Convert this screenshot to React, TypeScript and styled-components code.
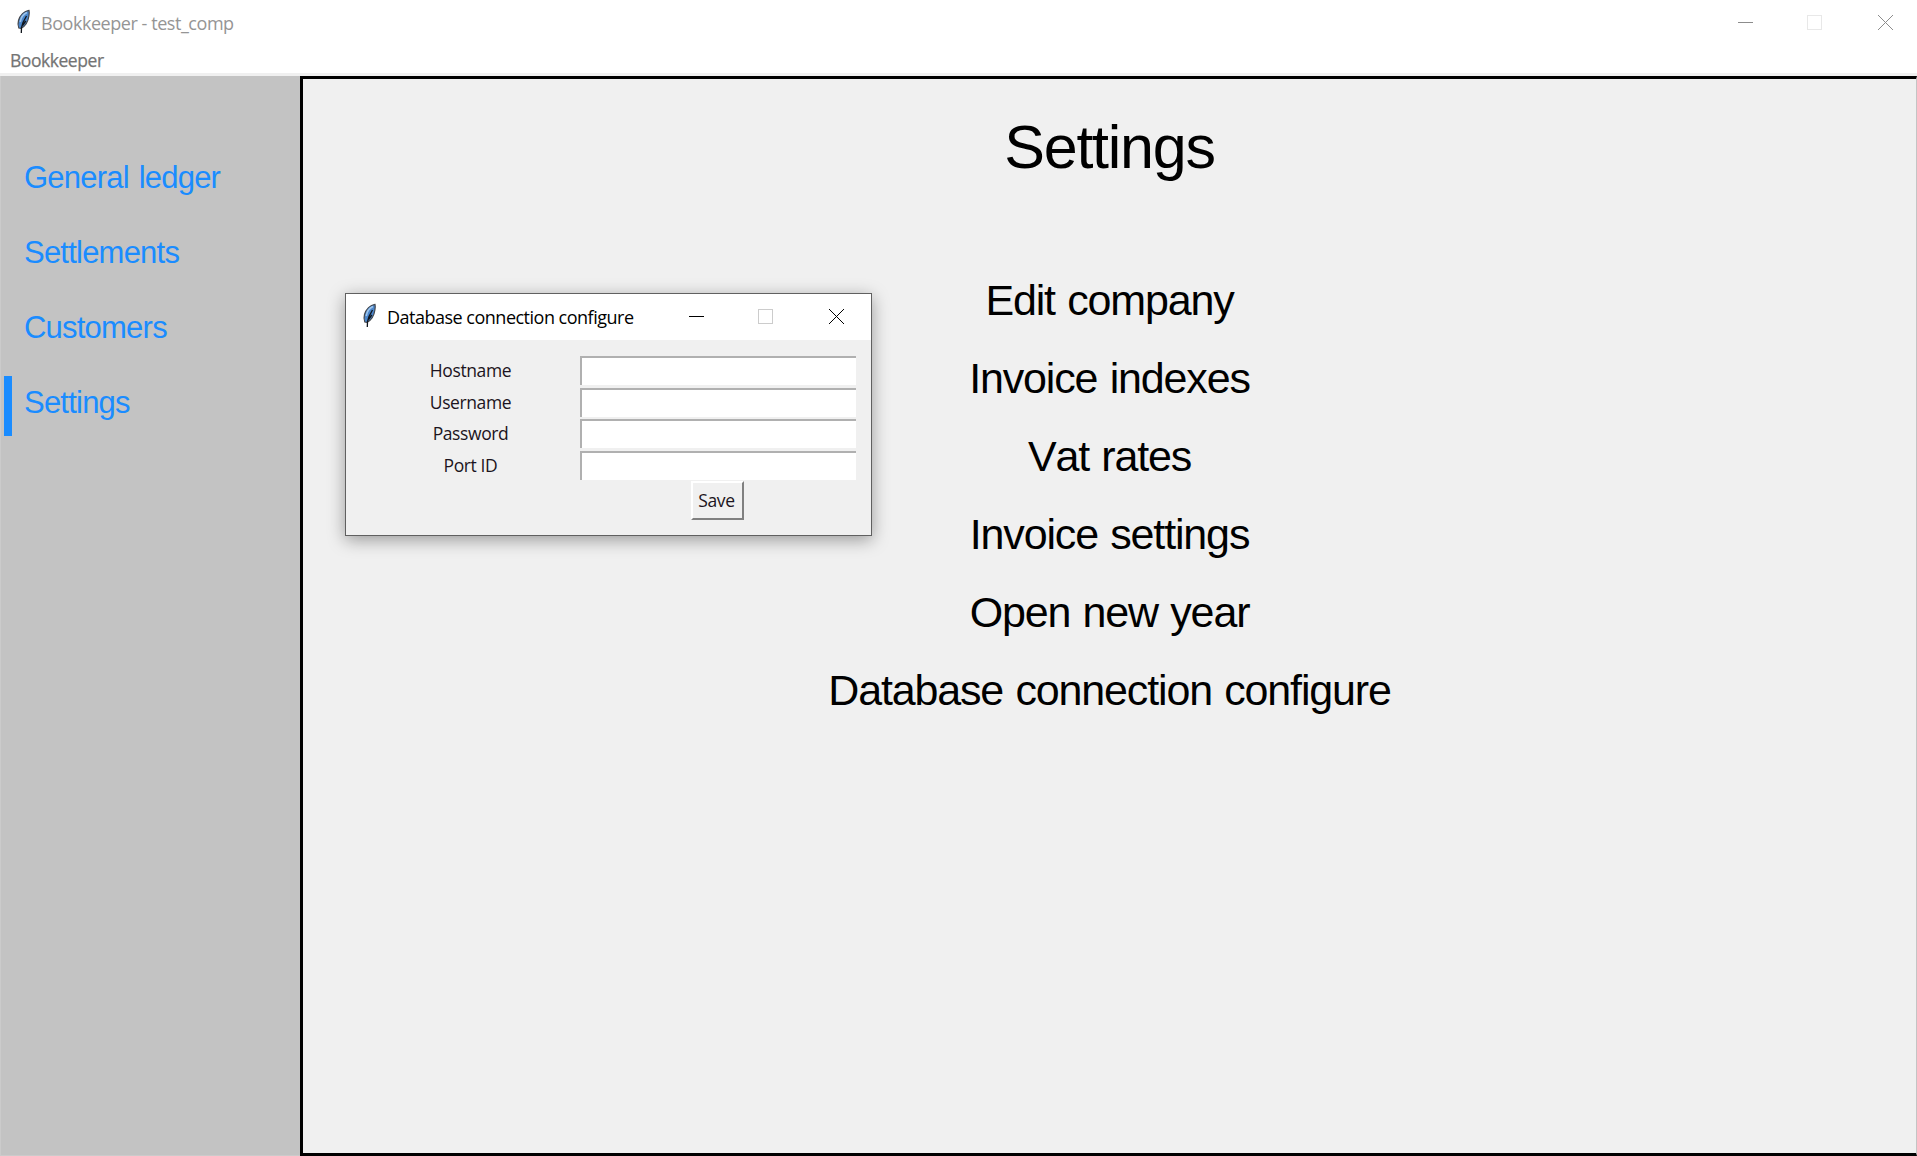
import React from "react";
import styled, { createGlobalStyle } from "styled-components";

const uiFont = `"Open Sans", "Noto Sans", sans-serif`;
const arial = `"Liberation Sans", Arial, sans-serif`;

const GlobalStyle = createGlobalStyle`
  * { box-sizing: border-box; }
  body { margin: 0; background: #fff; overflow: hidden; font-family: ${uiFont}; }
  button, input { font: inherit; border-radius: 0; }
`;

const Window = styled.div`
  width: 1917px;
  height: 1156px;
  display: flex;
  flex-direction: column;
`;

const TitleBar = styled.header<{ $height: number; $inset: number }>`
  height: ${(p) => p.$height}px;
  flex: none;
  display: flex;
  align-items: flex-start;
  background: #fff;
  padding-left: ${(p) => p.$inset}px;
`;

const FeatherIcon = styled.svg`
  width: 16px;
  height: 26px;
  flex: none;
  margin-top: 9px;
`;

const Title = styled.span<{ $color: string; $spacing: number }>`
  margin: 11px 0 0 10px;
  font-size: 18px;
  line-height: 24px;
  letter-spacing: ${(p) => p.$spacing}px;
  color: ${(p) => p.$color};
  white-space: nowrap;
`;

const Controls = styled.div<{ $right: number }>`
  margin: 15px ${(p) => p.$right}px 0 auto;
  display: flex;
  gap: 54px;
  svg:last-child { margin-left: 2px; }
`;

const Glyph = styled.svg`
  width: 15px;
  height: 15px;
  overflow: visible;
  fill: none;
  shape-rendering: crispEdges;
`;

const MenuBar = styled.nav`
  height: 35px;
  flex: none;
  padding-left: 10px;
  background: #fff;
  border-bottom: 3px solid #f0f0f0;
`;

const MenuItem = styled.span`
  display: block;
  padding-top: 7px;
  font-size: 17.5px;
  line-height: 24px;
  letter-spacing: -0.45px;
  color: #747474;
  -webkit-text-stroke: 0.25px #747474;
`;

const Body = styled.div`
  flex: 1;
  min-height: 0;
  display: flex;
`;

const Sidebar = styled.aside`
  width: 300px;
  flex: none;
  padding: 75px 0 0 4px;
  background: #c3c3c3;
  box-shadow: inset 1px 0 #cbcbcb, inset 0 -1px #cbcbcb;
  display: flex;
  flex-direction: column;
  gap: 15px;
`;

const NavItem = styled.a<{ $active?: boolean }>`
  height: 60px;
  border-left: 8px solid ${(p) => (p.$active ? "#1a8cff" : "transparent")};
  padding-left: 12px;
  font: 31px/54px ${arial};
  letter-spacing: -0.78px;
  word-spacing: 2px;
  color: #1a8cff;
`;

const Main = styled.main`
  flex: 1;
  background: #f0f0f0;
  border: 3px solid #000;
  border-right: 1px solid #c4c4c4;
  display: flex;
  flex-direction: column;
  align-items: center;
  padding: 33px 0 0 0;
`;

const Heading = styled.h1`
  margin: 0 0 88px;
  font: 400 61px/70px ${arial};
  letter-spacing: -1.25px;
  color: #000;
`;

const Option = styled.a`
  height: 78px;
  font: 43px/60px ${arial};
  font-kerning: none;
  letter-spacing: -1.15px;
  word-spacing: 1.5px;
  color: #000;
  white-space: nowrap;
`;

const Dialog = styled.section`
  position: absolute;
  left: 345px;
  top: 293px;
  width: 527px;
  height: 243px;
  border: 1px solid #606060;
  background: #f0f0f0;
  box-shadow: 0 4px 16px rgba(0, 0, 0, 0.36);
`;

const Form = styled.form`
  padding: 16px 15px 0 15px;
  display: grid;
  grid-template-columns: 219px 276px;
  grid-auto-rows: 31.5px;
`;

const Label = styled.label`
  text-align: center;
  font-size: 17.5px;
  line-height: 29.5px;
  letter-spacing: -0.4px;
  color: #1c1420;
`;

const Field = styled.input`
  width: 276px;
  height: 29px;
  border: 0 solid #b0b0b0;
  border-top-width: 2px;
  border-left-width: 2px;
  background: #fff;
  outline: none;
`;

const SaveButton = styled.button`
  grid-column: 2;
  width: 53px;
  height: 39px;
  margin: -1px 0 0 111px;
  padding: 0 2px 1px 0;
  border: 2px solid;
  border-color: #fff #808080 #808080 #fff;
  background: #f0f0f0;
  font-size: 17.5px;
  letter-spacing: -0.3px;
  color: #1c1420;
`;

function Feather() {
  return (
    <FeatherIcon viewBox="0 0 16 26">
      <path d="M14 1.300C9.300 2 5 6 3.500 11.500c-.8 3-.6 5.500.3 7.500l2.400.3C10.500 17 13.200 12 13.900 7c.3-2.200.5-4.200.1-5.700Z" fill="#4a86cc" stroke="#44474c" strokeWidth="1.200" />
      <path d="M12 3.500C8.500 5 6 8.500 5.200 13" stroke="#9cc4ec" strokeWidth="1.600" fill="none" />
      <path d="M11.500 7 8 13.500l-1.500 5-.2 5.500M10.800 12l-3.300 4.500" stroke="#10151c" strokeWidth="1.300" fill="none" />
    </FeatherIcon>
  );
}

function WindowControls({ color, disabled, right }: { color: string; disabled: string; right: number }) {
  return (
    <Controls $right={right}>
      <Glyph viewBox="0 0 15 15"><path d="M0 7.500h15" stroke={color} /></Glyph>
      <Glyph viewBox="0 0 15 15"><path d="M.5.5h14v14H.5z" stroke={disabled} /></Glyph>
      <Glyph viewBox="0 0 15 15"><path d="M0 0l15 15M15 0L0 15" stroke={color} /></Glyph>
    </Controls>
  );
}

const sections = ["General ledger", "Settlements", "Customers", "Settings"];
const options = ["Edit company", "Invoice indexes", "Vat rates", "Invoice settings", "Open new year", "Database connection configure"];
const fields = ["Hostname", "Username", "Password", "Port ID"];

export default function App() {
  return (
    <>
      <GlobalStyle />
      <Window>
        <TitleBar $height={41} $inset={15}>
          <Feather />
          <Title $color="#959595" $spacing={-0.45}>Bookkeeper - test_comp</Title>
          <WindowControls color="#8c8c8c" disabled="#e8e8e8" right={24} />
        </TitleBar>
        <MenuBar><MenuItem>Bookkeeper</MenuItem></MenuBar>
        <Body>
          <Sidebar>
            {sections.map((s) => <NavItem key={s} $active={s === "Settings"}>{s}</NavItem>)}
          </Sidebar>
          <Main>
            <Heading>Settings</Heading>
            {options.map((o) => <Option key={o}>{o}</Option>)}
          </Main>
        </Body>
      </Window>
      <Dialog>
        <TitleBar $height={46} $inset={15}>
          <Feather />
          <Title $color="#000" $spacing={-0.5}>Database connection configure</Title>
          <WindowControls color="#000" disabled="#ccc" right={27} />
        </TitleBar>
        <Form>
          {fields.map((f) => (
            <React.Fragment key={f}>
              <Label htmlFor={f}>{f}</Label>
              <Field id={f} />
            </React.Fragment>
          ))}
          <SaveButton type="button">Save</SaveButton>
        </Form>
      </Dialog>
    </>
  );
}
